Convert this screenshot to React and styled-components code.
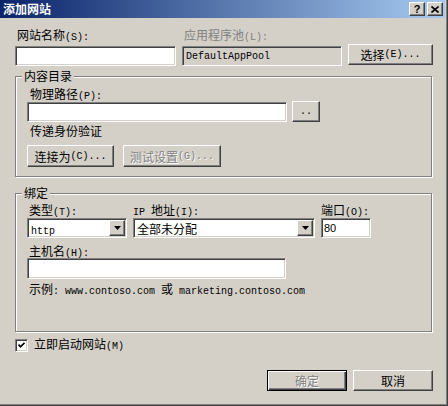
import React from "react";
import styled, { createGlobalStyle, css } from "styled-components";

const face = "#d4d0c8";

const GlobalStyle = createGlobalStyle`
  html, body { margin: 0; padding: 0; background: ${face}; }
  body {
    font-family: "Noto Sans CJK SC", "Liberation Sans", sans-serif;
    font-size: 12px;
    color: #000;
  }
`;

const raised = css`
  box-sizing: border-box;
  border: 1px solid;
  border-color: #fff #404040 #404040 #fff;
  box-shadow: inset -1px -1px #808080, inset 1px 1px ${face};
  background: ${face};
`;

const sunken = css`
  box-sizing: border-box;
  border: 1px solid;
  border-color: #808080 #fff #fff #808080;
  box-shadow: inset 1px 1px #404040, inset -1px -1px ${face};
`;

const Lat = styled.span`
  font-family: "Liberation Mono", "DejaVu Sans Mono", monospace;
  font-size: 10px;
`;

const Window = styled.div`
  width: 448px;
  height: 406px;
  box-sizing: border-box;
  background: ${face};
  border-right: 1px solid #404040;
  border-bottom: 1px solid #404040;
  box-shadow: inset -1px -1px #808080;
  padding-right: 2px;
  display: flex;
  flex-direction: column;
`;

const TitleBar = styled.div`
  height: 18px;
  display: flex;
  align-items: center;
  padding: 0 2px 0 3px;
  background: linear-gradient(to right, #0a246a, #a6caf0);
`;

const Title = styled.div`
  flex: 1;
  color: #fff;
  font-weight: bold;
  font-size: 12px;
  line-height: 14px;
`;

const CapButton = styled.div`
  ${raised};
  width: 16px;
  height: 14px;
  margin-left: ${(p) => p.$gap || 0}px;
  display: flex;
  align-items: center;
  justify-content: center;
  font-family: "Liberation Sans", sans-serif;
  font-weight: bold;
  font-size: 11px;
  line-height: 12px;
`;

const Body = styled.div`
  padding: 10px 0 0 15px;
  display: flex;
  flex-direction: column;
`;

const Row = styled.div`
  display: flex;
  align-items: ${(p) => p.$align || "flex-start"};
  gap: ${(p) => p.$gap || 0}px;
  margin-top: ${(p) => p.$mt || 0}px;
`;

const Field = styled.div`
  display: flex;
  flex-direction: column;
  width: ${(p) => p.$w}px;
  margin-top: ${(p) => p.$mt || 0}px;
`;

const Label = styled.div`
  height: 14px;
  line-height: 14px;
  margin: ${(p) => p.$mt || 0}px 0 ${(p) => (p.$mb === undefined ? 4 : p.$mb)}px ${(p) => (p.$ml === undefined ? 2 : p.$ml)}px;
  color: ${(p) => (p.$dim ? "#808080" : "#000")};
  white-space: nowrap;
`;

const TextBox = styled.div`
  ${sunken};
  width: ${(p) => p.$w}px;
  height: ${(p) => p.$h || 20}px;
  background: ${(p) => (p.$ro ? face : "#fff")};
  display: flex;
  align-items: center;
  padding-left: ${(p) => p.$pl || 3}px;
  white-space: nowrap;
`;

const Port = styled.span`
  font-family: "Liberation Sans", sans-serif;
  font-size: 11px;
`;

const Button = styled.div`
  ${raised};
  width: ${(p) => p.$w}px;
  height: ${(p) => p.$h || 21}px;
  margin-top: ${(p) => p.$mt || 0}px;
  display: flex;
  align-items: center;
  justify-content: center;
  white-space: nowrap;
  color: ${(p) => (p.$off ? "#808080" : "#000")};
  text-shadow: ${(p) => (p.$off ? "1px 1px #fff" : "none")};
  ${(p) =>
    p.$default &&
    css`
      border: 1px solid #000;
      box-shadow: inset 1px 1px #fff, inset -1px -1px #404040,
        inset -2px -2px #808080;
    `}
`;

const Group = styled.div`
  position: relative;
  box-sizing: border-box;
  width: 417px;
  height: ${(p) => p.$h}px;
  margin-top: ${(p) => p.$mt}px;
  border: 1px solid #808080;
  box-shadow: inset 1px 1px #fff, 1px 1px #fff;
  padding: ${(p) => p.$pt}px 0 0 11px;
`;

const Legend = styled.div`
  position: absolute;
  top: -8px;
  left: 6px;
  padding: 0 2px;
  line-height: 14px;
  background: ${face};
`;

const Note = styled.div`
  line-height: 14px;
  margin: ${(p) => p.$mt || 0}px 0 0 ${(p) => p.$ml || 3}px;
  white-space: nowrap;
`;

const Combo = styled.div`
  ${sunken};
  width: ${(p) => p.$w}px;
  height: 20px;
  background: #fff;
  display: flex;
  align-items: center;
  padding: 0 1px 0 3px;
`;

const ComboText = styled.div`
  flex: 1;
  white-space: nowrap;
`;

const Arrow = styled.div`
  ${raised};
  width: 16px;
  height: 16px;
  display: flex;
  align-items: center;
  justify-content: center;
`;

const CheckRow = styled.div`
  display: flex;
  align-items: center;
  margin-top: 7px;
  height: 13px;
`;

const CheckBox = styled.div`
  ${sunken};
  width: 13px;
  height: 13px;
  background: #fff;
  display: flex;
  align-items: center;
  justify-content: center;
`;

const CheckLabel = styled.div`
  margin-left: 6px;
  line-height: 14px;
`;

const Footer = styled.div`
  display: flex;
  justify-content: flex-end;
  gap: 6px;
  margin: 18px 12px 0 0;
`;

const DropArrow = () => (
  <Arrow>
    <svg width="7" height="4" viewBox="0 0 7 4">
      <polygon points="0,0 7,0 3.5,4" fill="#000" />
    </svg>
  </Arrow>
);

const App = () => (
  <>
    <GlobalStyle />
    <Window>
      <TitleBar>
        <Title>添加网站</Title>
        <CapButton>?</CapButton>
        <CapButton $gap={2}>
          <svg width="8" height="7" viewBox="0 0 8 7">
            <path d="M0.5 0.5 L7.5 6.5 M7.5 0.5 L0.5 6.5" stroke="#000" strokeWidth="1.6" />
          </svg>
        </CapButton>
      </TitleBar>

      <Body>
        <Row $gap={6}>
          <Field $w={161}>
            <Label>网站名称<Lat>(S):</Lat></Label>
            <TextBox $w={161} />
          </Field>
          <Field $w={160}>
            <Label $dim>应用程序池<Lat>(L):</Lat></Label>
            <TextBox $w={160} $ro>
              <Lat>DefaultAppPool</Lat>
            </TextBox>
          </Field>
          <Button $w={85} $mt={16}>
            选择<Lat>(E)...</Lat>
          </Button>
        </Row>

        <Group $h={101} $mt={10} $pt={10}>
          <Legend>内容目录</Legend>
          <Label $ml={3} $mb={0}>物理路径<Lat>(P):</Lat></Label>
          <Row $align="flex-end" $gap={5}>
            <TextBox $w={260} />
            <Button $w={28}>
              <Lat>..</Lat>
            </Button>
          </Row>
          <Note $mt={2}>传递身份验证</Note>
          <Row $gap={9} $mt={7}>
            <Button $w={87} $h={22}>
              连接为<Lat>(C)...</Lat>
            </Button>
            <Button $w={98} $h={22} $off>
              测试设置<Lat>(G)...</Lat>
            </Button>
          </Row>
        </Group>

        <Group $h={139} $mt={16} $pt={9}>
          <Legend>绑定</Legend>
          <Row $gap={6}>
            <Field $w={100}>
              <Label $mb={1}>类型<Lat>(T):</Lat></Label>
              <Combo $w={100}>
                <ComboText><Lat>http</Lat></ComboText>
                <DropArrow />
              </Combo>
            </Field>
            <Field $w={182}>
              <Label $mb={1} $ml={0}><Lat>IP </Lat>地址<Lat>(I):</Lat></Label>
              <Combo $w={182}>
                <ComboText>全部未分配</ComboText>
                <DropArrow />
              </Combo>
            </Field>
            <Field $w={50}>
              <Label $mb={1} $ml={0}>端口<Lat>(O):</Lat></Label>
              <TextBox $w={50} $pl={2}>
                <Port>80</Port>
              </TextBox>
            </Field>
          </Row>
          <Label $mt={6} $mb={0}>主机名<Lat>(H):</Lat></Label>
          <TextBox $w={259} $h={21} />
          <Note $mt={3} $ml={2}>
            示例<Lat>: www.contoso.com </Lat>或<Lat> marketing.contoso.com</Lat>
          </Note>
        </Group>

        <CheckRow>
          <CheckBox>
            <svg width="7" height="7" viewBox="0 0 7 7">
              <path d="M0.5 2.5 L2.5 4.8 L6.5 0.8" stroke="#000" strokeWidth="1.8" fill="none" />
            </svg>
          </CheckBox>
          <CheckLabel>立即启动网站<Lat>(M)</Lat></CheckLabel>
        </CheckRow>

        <Footer>
          <Button $w={80} $default $off>
            确定
          </Button>
          <Button $w={80}>取消</Button>
        </Footer>
      </Body>
    </Window>
  </>
);

export default App;
